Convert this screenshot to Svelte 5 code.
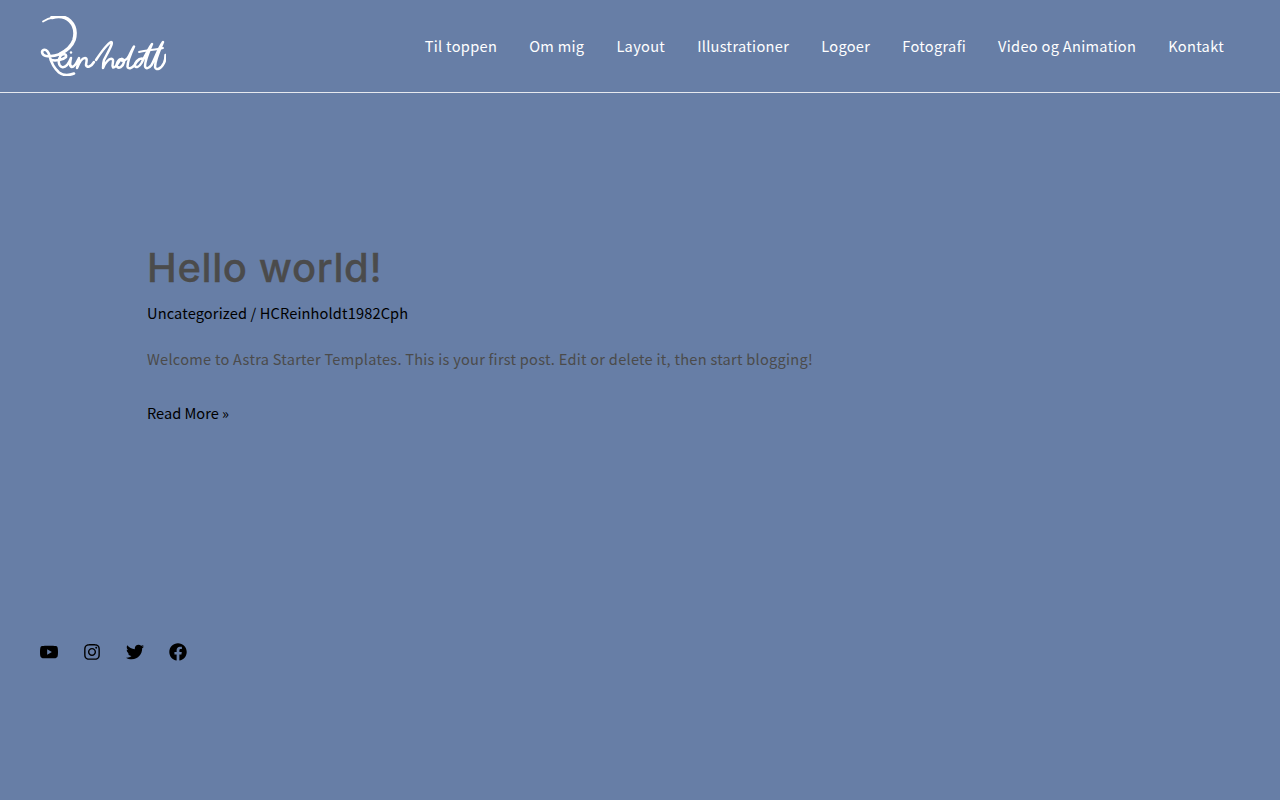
<script>
  const nav = ['Til toppen', 'Om mig', 'Layout', 'Illustrationer', 'Logoer', 'Fotografi', 'Video og Animation', 'Kontakt'];
</script>

<div class="page">
  <header class="header">
    <a class="logo" href="#top" aria-label="Reinholdt">
      <svg width="126" height="60" viewBox="40 16 126 60" fill="none" stroke="#fff" stroke-linecap="round" stroke-linejoin="round">
        <path stroke-width="1.8" d="M43 21.5C47 19 50 18 53 17.5" />
        <path stroke-width="3.6" d="M52 17.5C59 15.5 66 17 70 21C75 26 76 33 74 40C71.5 47 66 51 60 54" />
        <path stroke-width="2.6" d="M60.500 54C55 56 50 56.500 46 56C42 55.500 41 51 43.500 50C46.500 49 48.500 52 49.500 56C51 62 54 68 59 72.500C63 75.500 69 75.500 74 73.500" />
        <path stroke-width="2.5" d="M51 60C56 61 63 60 66 57C67 54 63 53 60.500 56C57.500 60 58.500 66 62 67C66 68 69 63 71 58C70 62 69 66 72 67C75 67 77 62 79 58C79 62 78 65 77 68C79 63 82 58 85 58C88 58 86 63 86 65C87 68 91 67 94 62" />
        <path stroke-width="2.5" d="M96 60C102 51 107 44 111 42C114 42 108 52 104 60C103 63 103 66 103 68C105 63 109 58 112 59C115 60 111 65 113 67.500C116 68 118 63 120 60" />
        <path stroke-width="2.5" d="M122 59C118 59 116 64 117 66.500C118.500 69 123 67 124 62C124.500 59 122 58.500 120.500 59.500C123 62 127 60 129 56C131 52 133 48 134 46.500C131 53 127.500 62 127.500 66.500C128 69.500 132 68.500 134.500 65C137 61 139 58.500 142 58.500C138 58.500 134.500 63 135 66C136 68.500 139.500 66.500 141.500 63C145 56 149 48 152 44C149 51 145 60 145 66C145.500 69.500 149 68.500 151.500 65C155 59 158 49 163 42C159.500 50 155 61 155 67C156 71 161 69 164 63C165.500 60 165.500 57 165.500 55" />
        <path stroke-width="1.9" d="M139 52C147 50 156 50 163 48" />
        <circle cx="71" cy="52.500" r="1.2" fill="#fff" stroke="none" />
      </svg>
    </a>
    <nav class="nav">
      {#each nav as item}
        <a href="#top">{item}</a>
      {/each}
    </nav>
  </header>

  <main class="main">
    <article class="post">
      <h2 class="title">Hello world!</h2>
      <p class="meta">Uncategorized / HCReinholdt1982Cph</p>
      <p class="excerpt">Welcome to Astra Starter Templates. This is your first post. Edit or delete it, then start blogging!</p>
      <a class="more" href="#top">Read More »</a>
    </article>
  </main>

  <footer class="footer">
    <a href="#top" aria-label="YouTube">
      <svg viewBox="15 0 546 512"><path d="M549.655 124.083c-6.281-23.65-24.787-42.276-48.284-48.597C458.781 64 288 64 288 64S117.22 64 74.629 75.486c-23.497 6.322-42.003 24.947-48.284 48.597-11.412 42.867-11.412 132.305-11.412 132.305s0 89.438 11.412 132.305c6.281 23.65 24.787 41.5 48.284 47.821C117.22 448 288 448 288 448s170.78 0 213.371-11.486c23.497-6.321 42.003-24.171 48.284-47.821 11.412-42.867 11.412-132.305 11.412-132.305s0-89.438-11.412-132.305zm-317.51 213.508V175.185l142.739 81.205-142.739 81.201z"/></svg>
    </a>
    <a href="#top" aria-label="Instagram">
      <svg viewBox="0 0 448 512"><path d="M224.1 141c-63.6 0-114.9 51.3-114.9 114.9s51.3 114.9 114.9 114.9S339 319.5 339 255.9 287.7 141 224.1 141zm0 189.6c-41.1 0-74.7-33.5-74.7-74.7s33.5-74.7 74.7-74.7 74.7 33.5 74.7 74.7-33.6 74.7-74.7 74.7zm146.4-194.3c0 14.9-12 26.8-26.8 26.8-14.9 0-26.8-12-26.8-26.8s12-26.8 26.8-26.8 26.8 12 26.8 26.8zm76.1 27.2c-1.7-35.9-9.9-67.7-36.2-93.9-26.2-26.2-58-34.4-93.9-36.2-37-2.1-147.9-2.1-184.9 0-35.8 1.7-67.6 9.9-93.9 36.1s-34.4 58-36.2 93.9c-2.1 37-2.1 147.9 0 184.9 1.7 35.9 9.9 67.7 36.2 93.9s58 34.4 93.9 36.2c37 2.1 147.9 2.1 184.9 0 35.9-1.7 67.7-9.9 93.9-36.2 26.2-26.2 34.4-58 36.2-93.9 2.1-37 2.1-147.8 0-184.8zM398.8 388c-7.8 19.6-22.9 34.7-42.6 42.6-29.5 11.7-99.5 9-132.1 9s-102.7 2.6-132.1-9c-19.6-7.8-34.7-22.9-42.6-42.6-11.7-29.5-9-99.5-9-132.1s-2.6-102.7 9-132.1c7.8-19.6 22.9-34.7 42.6-42.6 29.5-11.7 99.5-9 132.1-9s102.7-2.6 132.1 9c19.6 7.8 34.7 22.9 42.6 42.6 11.7 29.5 9 99.5 9 132.1s2.7 102.7-9 132.1z"/></svg>
    </a>
    <a href="#top" aria-label="Twitter">
      <svg viewBox="0 0 512 512"><path d="M459.37 151.716c.325 4.548.325 9.097.325 13.645 0 138.72-105.583 298.558-298.558 298.558-59.452 0-114.68-17.219-161.137-47.106 8.447.974 16.568 1.299 25.34 1.299 49.055 0 94.213-16.568 130.274-44.832-46.132-.975-84.792-31.188-98.112-72.772 6.498.974 12.995 1.624 19.818 1.624 9.421 0 18.843-1.3 27.614-3.573-48.081-9.747-84.143-51.98-84.143-102.985v-1.299c13.969 7.797 30.214 12.67 47.431 13.319-28.264-18.843-46.781-51.005-46.781-87.391 0-19.492 5.197-37.36 14.294-52.954 51.655 63.675 129.3 105.258 216.365 109.807-1.624-7.797-2.599-15.918-2.599-24.04 0-57.828 46.782-104.934 104.934-104.934 30.213 0 57.502 12.67 76.67 33.137 23.715-4.548 46.456-13.32 66.599-25.34-7.798 24.366-24.366 44.833-46.132 57.827 21.117-2.273 41.584-8.122 60.426-16.243-14.292 20.791-32.161 39.308-52.628 54.253z"/></svg>
    </a>
    <a href="#top" aria-label="Facebook">
      <svg viewBox="0 0 512 512"><path d="M504 256C504 119 393 8 256 8S8 119 8 256c0 123.78 90.69 226.38 209.25 245V327.69h-63V256h63v-54.64c0-62.15 37-96.48 93.67-96.48 27.14 0 55.52 4.84 55.52 4.84v61h-31.28c-30.8 0-40.41 19.12-40.41 38.73V256h68.78l-11 71.69h-57.78V501C413.31 482.38 504 379.78 504 256z"/></svg>
    </a>
  </footer>
</div>

<style>
  :global(body) {
    margin: 0;
    background: #677ea6;
  }
  .page {
    min-height: 800px;
    background: #677ea6;
    font-family: "Noto Sans CJK SC", "Noto Sans", sans-serif;
    font-size: 14.6px;
    color: #000;
    box-sizing: border-box;
  }
  a {
    color: inherit;
    text-decoration: none;
  }
  .header {
    display: flex;
    align-items: center;
    justify-content: space-between;
    height: 92px;
    padding: 0 40px;
    border-bottom: 1px solid #e6e9ef;
  }
  .logo {
    display: block;
    height: 60px;
  }
  .logo svg {
    display: block;
  }
  .nav {
    display: flex;
    gap: 32px;
    margin-right: 16px;
    color: #fff;
    line-height: 22px;
    letter-spacing: 0.31px;
  }
  .main {
    padding: 150px 147px 0;
  }
  .title {
    margin: 0;
    font-family: Inter, sans-serif;
    font-weight: 500;
    font-size: 40px;
    letter-spacing: 0.6px;
    -webkit-text-stroke: 0.3px #4b4b4b;
    line-height: 50px;
    color: #4b4b4b;
  }
  .meta {
    margin: 8px 0 0;
    line-height: 24px;
    letter-spacing: 0.135px;
  }
  .excerpt {
    margin: 22px 0 0;
    line-height: 24px;
    letter-spacing: 0.26px;
    color: #4b4b4b;
  }
  .more {
    display: block;
    margin-top: 30px;
    line-height: 24px;
  }
  .footer {
    display: flex;
    gap: 25px;
    padding: 218px 40px 0;
  }
  .footer a {
    display: block;
    width: 18px;
    height: 18px;
  }
  .footer svg {
    display: block;
    width: 18px;
    height: 18px;
    fill: #000;
  }
</style>
